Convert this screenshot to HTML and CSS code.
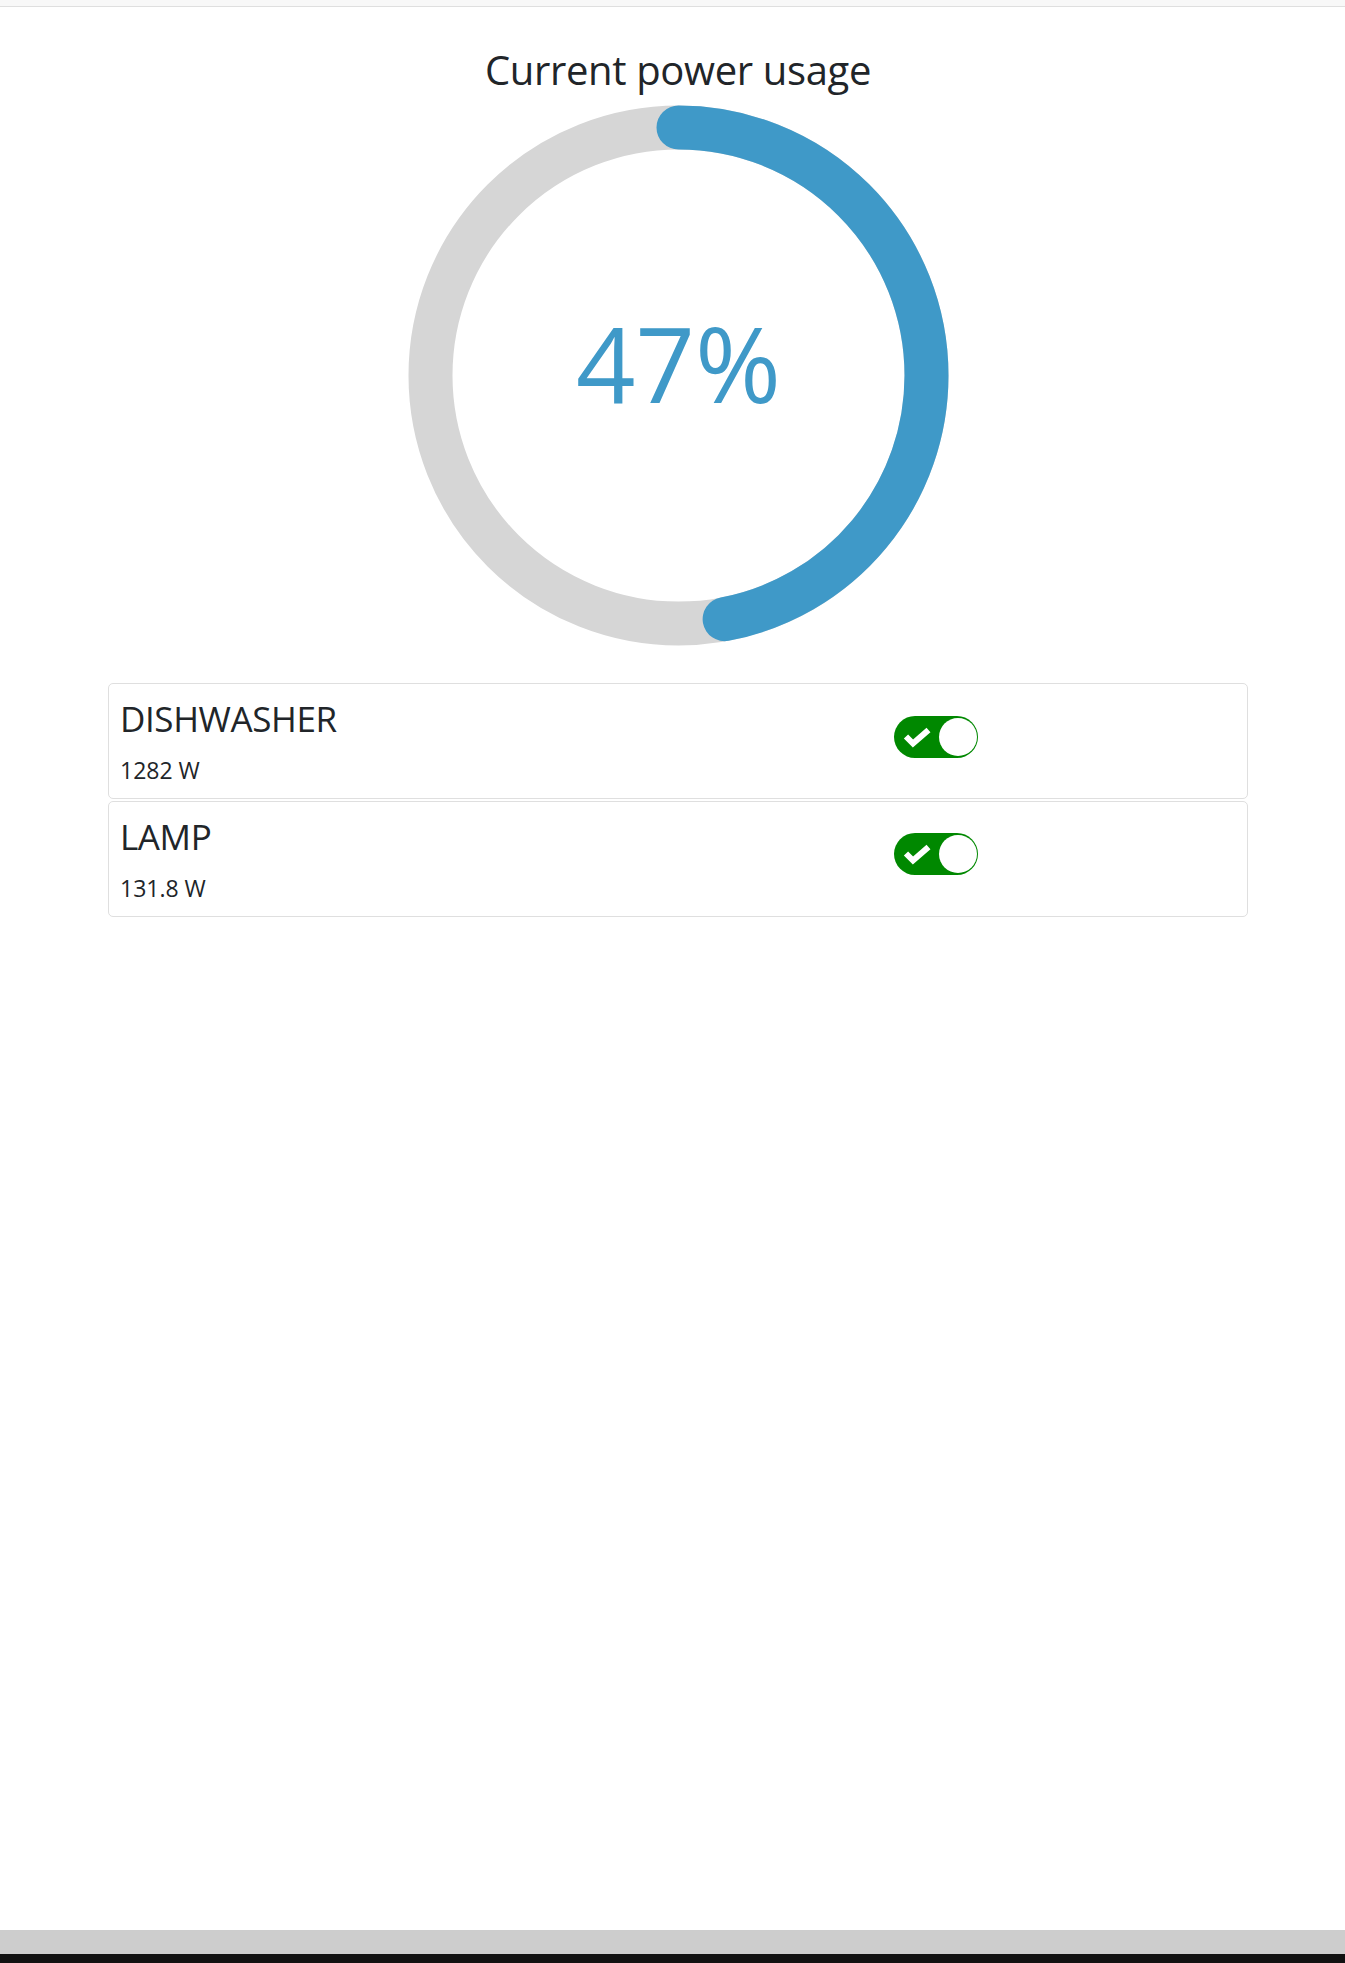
FILE: index.html
```html
<!DOCTYPE html>
<html lang="en">
<head>
<meta charset="utf-8">
<title>Current power usage</title>
<link rel="stylesheet" href="styles.css">
</head>
<body>
<div class="app">
  <div class="topbar"></div>
  <main class="page">
    <div class="container">
      <h1 class="title">Current power usage</h1>
      <div class="gauge">
        <svg class="gauge-svg" width="541" height="541" viewBox="0 0 541 541">
          <circle cx="270.5" cy="270.5" r="248" fill="none" stroke="#d6d6d6" stroke-width="44"/>
          <circle cx="270.5" cy="270.5" r="248" fill="none" stroke="#3f99c8" stroke-width="44" stroke-linecap="round" stroke-dasharray="732.4 2000" transform="rotate(-90 270.5 270.5)"/>
          <text class="gauge-value" x="270.5" y="297.5" text-anchor="middle">47%</text>
        </svg>
      </div>
      <div class="devices">
        <div class="card">
          <div class="info">
            <div class="name">DISHWASHER</div>
            <div class="power">1282 W</div>
          </div>
          <div class="toggle">
            <svg class="check" width="42" height="42" viewBox="0 0 42 42"><polyline points="12,20.5 19,27.5 34.5,14" fill="none" stroke="#fff" stroke-width="6"/></svg>
            <span class="knob"></span>
          </div>
        </div>
        <div class="card">
          <div class="info">
            <div class="name">LAMP</div>
            <div class="power">131.8 W</div>
          </div>
          <div class="toggle toggle-2">
            <svg class="check" width="42" height="42" viewBox="0 0 42 42"><polyline points="12,20.5 19,27.5 34.5,14" fill="none" stroke="#fff" stroke-width="6"/></svg>
            <span class="knob"></span>
          </div>
        </div>
      </div>
    </div>
  </main>
  <div class="scroll-track"></div>
  <div class="bottom-edge"></div>
</div>
</body>
</html>
```

FILE: styles.css
```css
html, body {
  margin: 0;
  padding: 0;
  background: #ffffff;
}

body {
  font-family: "Open Sans", "Noto Sans", sans-serif;
  color: #212529;
}

.app {
  display: flex;
  flex-direction: column;
  min-height: 100vh;
}

.topbar {
  height: 6px;
  background: #f8f8f8;
  border-bottom: 1px solid #dfdfdf;
  flex: 0 0 auto;
}

.page {
  flex: 1 1 auto;
  padding-left: 11px;
}

.container {
  width: 1140px;
  margin: 0 auto;
}

.title {
  margin: 39px 0 0;
  font-size: 40px;
  line-height: 48px;
  font-weight: 400;
  letter-spacing: -0.35px;
  text-align: center;
}

.gauge {
  display: flex;
  justify-content: center;
  margin-top: 11px;
}

.gauge-svg {
  display: block;
  margin-left: 1px;
}

.gauge-value {
  font-family: "Open Sans", "Noto Sans", sans-serif;
  font-size: 104px;
  fill: #3f99c8;
}

.devices {
  margin-top: 37px;
  display: flex;
  flex-direction: column;
  gap: 2px;
}

.card {
  display: flex;
  border: 1px solid #dfdfdf;
  border-radius: 5px;
  padding: 13px 11px 13px;
}

.info {
  flex: 0 0 774px;
}

.name {
  font-size: 35px;
  line-height: 44px;
  letter-spacing: -0.4px;
}

.power {
  margin-top: 14px;
  font-size: 23px;
  line-height: 30px;
}

.toggle {
  position: relative;
  width: 84px;
  height: 42px;
  margin-top: 19px;
  border-radius: 21px;
  background: #008800;
}

.toggle-2 {
  margin-top: 18px;
}

.check {
  position: absolute;
  left: 0;
  top: 0;
}

.knob {
  position: absolute;
  right: 1.5px;
  top: 2px;
  width: 38px;
  height: 38px;
  border-radius: 50%;
  background: #ffffff;
}

.scroll-track {
  height: 24px;
  background: #cdcdcd;
  flex: 0 0 auto;
}

.bottom-edge {
  height: 9px;
  background: #111111;
  flex: 0 0 auto;
}
```
